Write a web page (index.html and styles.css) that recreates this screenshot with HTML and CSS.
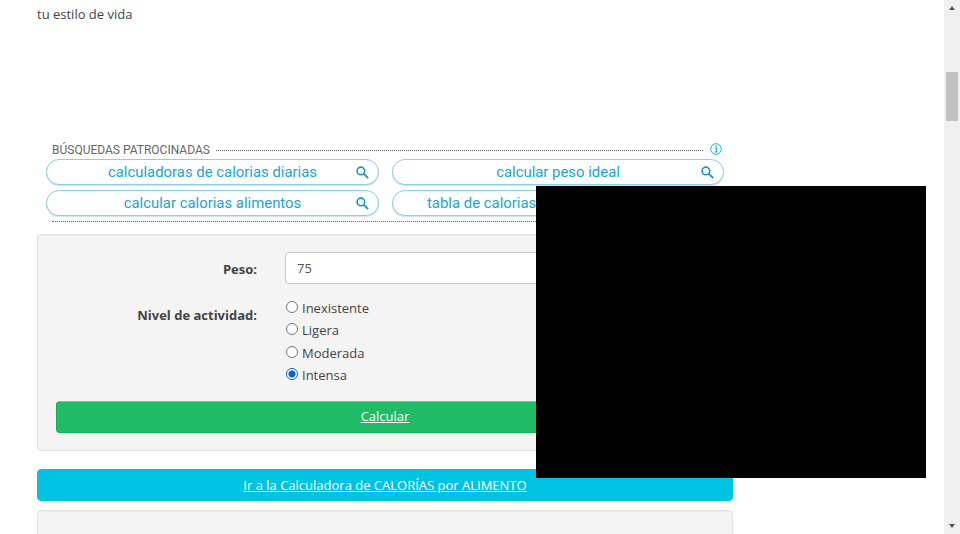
FILE: index.html
```html
<!DOCTYPE html>
<html lang="es">
<head>
<meta charset="utf-8">
<title>Calculadora</title>
<link rel="stylesheet" href="styles.css">
</head>
<body>
<svg class="defs" width="0" height="0"><symbol id="search" viewBox="0 0 13 13"><circle cx="4.9" cy="4.9" r="3.8" fill="none" stroke="currentColor" stroke-width="1.6"/><path d="M7.6 7.6l4.6 4.6" stroke="currentColor" stroke-width="1.8"/></symbol></svg>
<main class="page">
  <p class="intro">tu estilo de vida</p>
  <section class="ads">
    <div class="ads-head">
      <span class="ads-title">BÚSQUEDAS PATROCINADAS</span>
      <span class="dots"></span>
      <svg class="info" viewBox="0 0 12 12"><circle cx="6" cy="6" r="5.3" fill="none" stroke="currentColor" stroke-width="1"/><path d="M4.8 5h1.5v4M4.5 9h3.2M6 2.4v1.5" fill="none" stroke="currentColor" stroke-width="1.2"/></svg>
    </div>
    <div class="pills">
      <a class="pill"><span>calculadoras de calorias diarias</span><svg><use href="#search"/></svg></a>
      <a class="pill"><span>calcular peso ideal</span><svg><use href="#search"/></svg></a>
      <a class="pill"><span>calcular calorias alimentos</span><svg><use href="#search"/></svg></a>
      <a class="pill long"><span>tabla de calorias</span><svg><use href="#search"/></svg></a>
    </div>
    <div class="ads-end"></div>
  </section>
  <form class="well">
    <div class="row">
      <label class="label">Peso:</label>
      <input class="field" type="text" value="75">
    </div>
    <div class="row activity">
      <span class="label">Nivel de actividad:</span>
      <div class="options">
        <label><i class="radio"></i>Inexistente</label>
        <label><i class="radio"></i>Ligera</label>
        <label><i class="radio"></i>Moderada</label>
        <label><i class="radio on"></i>Intensa</label>
      </div>
    </div>
    <a class="btn green">Calcular</a>
  </form>
  <a class="btn cyan">Ir a la Calculadora de CALORÍAS por ALIMENTO</a>
  <div class="well next"></div>
</main>
<div class="overlay"></div>
<aside class="scrollbar"><i class="up"></i><i class="thumb"></i><i class="down"></i></aside>
</body>
</html>
```
FILE: styles.css
```css
* { box-sizing: border-box; }
body {
  margin: 0;
  height: 534px;
  overflow: hidden;
  display: flex;
  justify-content: space-between;
  position: relative;
  background: #fff;
  color: #444;
  font: 13px/22.3px "Open Sans", sans-serif;
}
.defs { position: absolute; }
.page { width: 696px; margin-left: 37px; height: 534px; overflow: hidden; }
.intro { margin: 3px 0 0; height: 139px; }
.ads { height: 92px; padding: 0 9px; font-family: Roboto, sans-serif; }
.ads-head { display: flex; align-items: center; height: 15px; padding: 0 2px 0 6px; }
.ads-title { font-size: 12px; line-height: 15px; padding-top: 1px; color: #666; width: 159px; white-space: nowrap; }
.dots { flex: 1; height: 1px; margin: 2px 7px 0 5px; border-top: 1px dotted #666; }
.info { width: 12px; height: 12px; margin-top: -1px; color: #12b5d8; }
.pills { display: grid; grid-template-columns: 333px 332px; column-gap: 13px; row-gap: 5px; margin-top: 2px; }
.pill {
  height: 26px;
  display: flex;
  align-items: center;
  padding: 0 9px 0 0;
  border: 1px solid #8dcfe3;
  border-radius: 13px;
  box-shadow: 0 1px 1px #cde2e9;
  background: #fff;
  color: #24a4cd;
  font-size: 14.9px;
  line-height: 22px;
}
.pill span { flex: 1; text-align: center; padding: 0 0 1px 22px; white-space: nowrap; }
.pill.long span { text-align: left; padding-left: 34px; }
.pill svg { width: 13px; height: 13px; color: #1698c5; }
.ads-end { margin: 5px 8px 0 6px; border-top: 1px dotted #666; }
.well {
  height: 217px;
  padding: 17px 18px;
  background: #f4f4f4;
  border: 1px solid #e3e3e3;
  border-radius: 4px;
  box-shadow: inset 0 1px 1px rgba(0, 0, 0, .04);
}
.row { display: flex; }
.label { width: 201px; margin-right: 28px; padding-top: 6px; font-weight: 700; text-align: right; }
.activity .label { padding-top: 7px; }
.field {
  flex: 1;
  min-width: 0;
  height: 32px;
  padding: 0 11px;
  border: 1px solid #ccc;
  border-radius: 4px;
  background: #fff;
  color: #555;
  font: 13px "Open Sans", sans-serif;
}
.activity { margin-top: 13px; height: 103.5px; }
.options label { display: flex; align-items: center; height: 22.3px; }
.radio { width: 12px; height: 12px; margin: -2px 4px 0 1px; border: 1px solid #767676; border-radius: 50%; background: #fff; }
.radio.on { border-color: #0a62cc; background: radial-gradient(circle, #0a62cc 0 3.2px, #fff 3.9px); }
.btn {
  display: block;
  height: 32px;
  border: 1px solid #15af56;
  border-radius: 4px;
  color: #fff;
  line-height: 30px;
  text-align: center;
  text-decoration: underline;
}
.green { background: #1fbb65; border-top-color: #62cf93; line-height: 29px; }
.cyan { background: #00c3e1; border-color: #00c0de; margin-top: 18px; }
.next { margin-top: 9px; height: 60px; }
.overlay { position: absolute; left: 536px; top: 186px; width: 390px; height: 292px; background: #000; }
.scrollbar { display: flex; flex-direction: column; align-items: center; width: 16px; height: 534px; background: #f0f0f0; }
.up { margin-top: 6px; border: 3.5px solid transparent; border-top: 0; border-bottom: 4px solid #505050; }
.thumb { width: 12px; height: 49px; margin-top: 62px; background: #c1c1c1; }
.down { margin: auto 0 6px; border: 3.5px solid transparent; border-bottom: 0; border-top: 4px solid #505050; }
```
